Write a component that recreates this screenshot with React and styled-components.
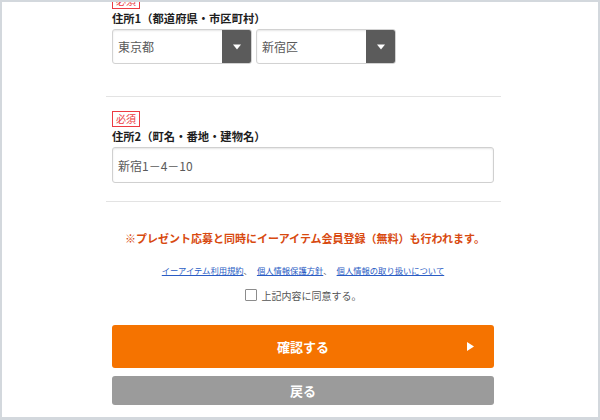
import React from "react";
import styled, { createGlobalStyle } from "styled-components";

const GlobalStyle = createGlobalStyle`
  html, body { margin: 0; padding: 0; background: #d3d8dd; }
  body { font-family: "Noto Sans CJK JP", "Noto Sans", sans-serif; }
  * { box-sizing: border-box; }
`;

const Frame = styled.div`
  margin: 2px 2px 3px 2px;
  width: 596px;
  height: 415px;
  background: #fff;
  overflow: hidden;
`;

const Column = styled.div`
  width: 395px;
  margin-left: 104px;
  margin-top: -9px;
`;

const Section = styled.div`
  padding: ${(p) => p.$pad};
  border-bottom: ${(p) => (p.$divided ? "1px solid #e3e3e3" : "none")};
`;

const Badge = styled.span`
  display: block;
  width: fit-content;
  height: 16px;
  border: 1px solid #ec3b43;
  color: #ec3b43;
  font-size: 10px;
  line-height: 14px;
  padding: 0 3px;
  margin-bottom: 2px;
`;

const Label = styled.div`
  font-size: 11.3px;
  font-weight: 700;
  line-height: 14px;
  color: #1e1e1e;
  margin-bottom: 4px;
`;

const SelectRow = styled.div`
  display: flex;
  gap: 4px;
`;

const SelectBox = styled.div`
  display: flex;
  width: 140px;
  height: 35px;
  border: 1px solid #d2d2d2;
  border-radius: 3px;
  box-shadow: inset 0 1px 2px rgba(0, 0, 0, 0.1);
  overflow: hidden;
`;

const SelectValue = styled.div`
  flex: 1;
  display: flex;
  align-items: center;
  padding-left: 5px;
  font-size: 12px;
  color: #5a5a5a;
`;

const SelectArrow = styled.div`
  width: 29px;
  background: #5b5b5b;
  display: flex;
  align-items: center;
  justify-content: center;
`;

const TextInput = styled.div`
  display: flex;
  align-items: center;
  height: 36px;
  border: 1px solid #d0d0d0;
  border-radius: 3px;
  box-shadow: inset 0 1px 2px rgba(0, 0, 0, 0.1);
  padding-left: 5px;
  font-size: 12px;
  color: #5a5a5a;
`;

const Note = styled.div`
  text-align: center;
  color: #d84a10;
  font-weight: 700;
  font-size: 11px;
  line-height: 16px;
  padding-left: 4px;
`;

const Links = styled.div`
  margin-top: 18px;
  text-align: center;
  font-size: 8.3px;
  line-height: 12px;
  color: #666;
`;

const Link = styled.a`
  color: #2a5cc4;
  text-decoration: underline;
`;

const Sep = styled.span`
  margin-right: 5px;
`;

const CheckRow = styled.label`
  margin-top: 10px;
  height: 18px;
  display: flex;
  align-items: center;
  justify-content: center;
  gap: 5px;
  font-size: 10px;
  color: #555;
`;

const CheckBox = styled.span`
  width: 12px;
  height: 12px;
  border: 1px solid #8c8c8c;
  border-radius: 1px;
  background: #fff;
`;

const Button = styled.div`
  margin-top: ${(p) => p.$mt};
  height: ${(p) => p.$h};
  background: ${(p) => p.$bg};
  border-radius: 3px;
  color: #fff;
  font-weight: 700;
  font-size: 13px;
  display: grid;
  grid-template-columns: 1fr auto 1fr;
  align-items: center;
`;

const ButtonText = styled.span`
  grid-column: 2;
`;

const ButtonIcon = styled.span`
  grid-column: 3;
  justify-self: end;
  padding-right: 20px;
  display: flex;
`;

const DownTri = () => (
  <svg width="8" height="6" viewBox="0 0 8 6">
    <path d="M0 0.5 H8 L4 5.5 Z" fill="#fff" />
  </svg>
);

const RightTri = () => (
  <svg width="7" height="9" viewBox="0 0 7 9">
    <path d="M0 0 L7 4.5 L0 9 Z" fill="#fff" />
  </svg>
);

export default function App() {
  return (
    <>
      <GlobalStyle />
      <Frame>
        <Column>
          <Section $divided $pad="0 7px 32px 6px">
            <Badge>必須</Badge>
            <Label>住所1（都道府県・市区町村）</Label>
            <SelectRow>
              <SelectBox>
                <SelectValue>東京都</SelectValue>
                <SelectArrow>
                  <DownTri />
                </SelectArrow>
              </SelectBox>
              <SelectBox>
                <SelectValue>新宿区</SelectValue>
                <SelectArrow>
                  <DownTri />
                </SelectArrow>
              </SelectBox>
            </SelectRow>
          </Section>
          <Section $divided $pad="14px 7px 18px 6px">
            <Badge>必須</Badge>
            <Label>住所2（町名・番地・建物名）</Label>
            <TextInput>新宿1－4－10</TextInput>
          </Section>
          <Section $pad="28px 7px 0 6px">
            <Note>※プレゼント応募と同時にイーアイテム会員登録（無料）も行われます。</Note>
            <Links>
              <Link>イーアイテム利用規約</Link>
              <Sep>、</Sep>
              <Link>個人情報保護方針</Link>
              <Sep>、</Sep>
              <Link>個人情報の取り扱いについて</Link>
            </Links>
            <CheckRow>
              <CheckBox />
              <span>上記内容に同意する。</span>
            </CheckRow>
            <Button $mt="21px" $h="43px" $bg="#f57300">
              <ButtonText>確認する</ButtonText>
              <ButtonIcon>
                <RightTri />
              </ButtonIcon>
            </Button>
            <Button $mt="8px" $h="29px" $bg="#9b9b9b">
              <ButtonText>戻る</ButtonText>
            </Button>
          </Section>
        </Column>
      </Frame>
    </>
  );
}
